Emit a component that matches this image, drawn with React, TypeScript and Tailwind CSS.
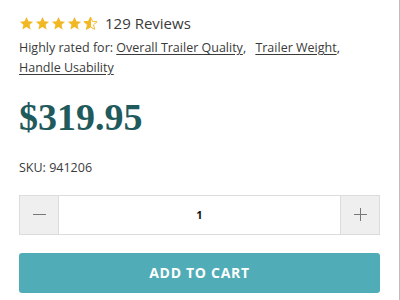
import React from "react";

const Star = ({ fill }: { fill: "full" | "half" }) => (
  <svg width="15" height="15" viewBox="0 0 24 24">
    <defs>
      <linearGradient id="halfg">
        <stop offset="50%" stopColor="#f2b824" />
        <stop offset="50%" stopColor="#ffffff" />
      </linearGradient>
    </defs>
    <path
      d="M12 1.5l3.1 7 7.4.6-5.6 4.9 1.7 7.4L12 17.5l-6.6 3.9 1.7-7.4L1.5 9.1l7.4-.6z"
      fill={fill === "full" ? "#f2b824" : "url(#halfg)"}
      stroke="#f2b824"
      strokeWidth={fill === "full" ? 0 : 1.5}
      strokeLinejoin="round"
    />
  </svg>
);

export default function App() {
  const sans = { fontFamily: '"Open Sans", "Liberation Sans", sans-serif' };
  return (
    <div className="w-[400px] h-[300px] bg-white border-r border-[#bdbdbd] overflow-hidden" style={sans}>
      <div className="pl-[19px] pr-[19px] pt-[12px]">
        <div className="flex items-center h-[22px]">
          <div className="flex gap-[1px]">
            <Star fill="full" />
            <Star fill="full" />
            <Star fill="full" />
            <Star fill="full" />
            <Star fill="half" />
          </div>
          <span className="ml-[7px] text-[15px] text-[#3a3a3a]">129 Reviews</span>
        </div>
        <div className="mt-[4px] text-[12.5px] leading-[20px] text-[#3a3a3a]">
          Highly rated for: <a className="underline underline-offset-2">Overall Trailer Quality</a>,{"  "}
          <a className="underline underline-offset-2 ml-[6px]">Trailer Weight</a>,
          <br />
          <a className="underline underline-offset-2">Handle Usability</a>
        </div>
        <div
          className="mt-[15px] text-[38px] font-bold leading-[48px] text-[#1f5a5c]"
          style={{ fontFamily: '"Liberation Serif", "DejaVu Serif", serif' }}
        >
          $319.95
        </div>
        <div className="mt-[18px] text-[12.5px] text-[#3a3a3a]">SKU: 941206</div>
        <div className="mt-[17px] flex h-[40px] border border-[#dcdcdc]">
          <button className="w-[39px] bg-[#efefef] border-r border-[#dcdcdc] flex items-center justify-center">
            <span className="block w-[13px] h-[1px] bg-[#777]" />
          </button>
          <div className="flex-1 flex items-center justify-center text-[11px] font-bold text-[#111]">1</div>
          <button className="w-[39px] bg-[#efefef] border-l border-[#dcdcdc] flex items-center justify-center relative">
            <span className="absolute w-[13px] h-[1px] bg-[#777]" />
            <span className="absolute w-[1px] h-[13px] bg-[#777]" />
          </button>
        </div>
        <button className="mt-[18px] w-full h-[40px] rounded-[3px] bg-[#50acb6] text-white text-[14px] font-bold tracking-[0.05em] uppercase flex items-center justify-center">
          Add to Cart
        </button>
      </div>
    </div>
  );
}
